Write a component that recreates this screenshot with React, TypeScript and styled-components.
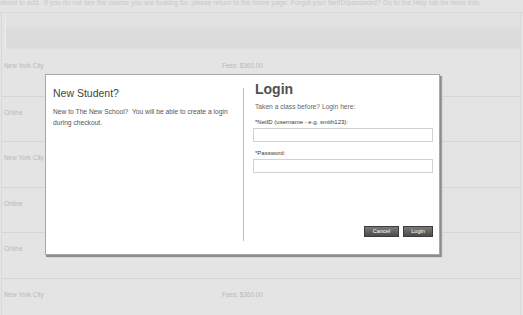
import styled, { createGlobalStyle } from 'styled-components';

const GlobalStyle = createGlobalStyle`
  html, body {
    margin: 0;
    padding: 0;
    background: #e4e4e4;
    font-family: "Liberation Sans", Arial, sans-serif;
    overflow: hidden;
  }
`;

const rows = [
  { place: 'New York City', fees: 'Fees: $360.00' },
  { place: 'Online' },
  { place: 'New York City' },
  { place: 'Online' },
  { place: 'Online' },
  { place: 'New York City', fees: 'Fees: $360.00' },
];

const App = () => {
  return (
    <Page>
      <GlobalStyle />
      <Notice>
        about to add.&nbsp; If you do not see the course you are looking for, please return to the home page. Forgot your NetID/password? Go to the Help tab for more info.
      </Notice>
      <Table>
        <HeaderBand />
        {rows.map((r, i) => (
          <Row key={i}>
            <Place>{r.place}</Place>
            {r.fees && <Fees>{r.fees}</Fees>}
          </Row>
        ))}
      </Table>

      <Modal>
        <LeftCol>
          <Title>New Student?</Title>
          <Body>New to The New School?&nbsp; You will be able to create a login during checkout.</Body>
        </LeftCol>
        <RightCol>
          <LoginTitle>Login</LoginTitle>
          <Sub>Taken a class before? Login here:</Sub>
          <Label>*NetID (username - e.g. smith123):</Label>
          <Input type="text" />
          <Label $gap={7}>*Password:</Label>
          <Input type="password" />
          <Buttons>
            <Button $w={35}>Cancel</Button>
            <Button $w={30}>Login</Button>
          </Buttons>
        </RightCol>
      </Modal>
    </Page>
  );
};

export default App;

const Page = styled.div`
  position: relative;
  width: 523px;
  height: 315px;
  overflow: hidden;
`;

const Notice = styled.div`
  height: 15px;
  margin-top: -2px;
  box-sizing: border-box;
  font-size: 6.9px;
  line-height: 10px;
  color: #c8c8c8;
  white-space: nowrap;
  border-bottom: 1px solid #d9d9d9;
`;

const Table = styled.div`
  margin: 0 2px 0 1px;
  border-left: 1px solid #d8d8d8;
  border-right: 1px solid #d8d8d8;
  display: flex;
  flex-direction: column;
`;

const HeaderBand = styled.div`
  height: 37px;
  margin-left: 3px;
  border-left: 1px solid #ebebeb;
  background: linear-gradient(#e3e3e3 0%, #e1e1e1 38%, #dcdcdc 45%, #dbdbdb 90%, #e2e2e2 100%);
`;

const Row = styled.div`
  display: flex;
  height: 45.5px;
  box-sizing: border-box;
  border-top: 1px solid #d6d6d6;
  padding: 12px 0 0 2px;
  font-size: 6.4px;
  line-height: 8px;
  color: #b9b9b9;
  &:nth-of-type(2) {
    border-top: none;
  }
`;

const Place = styled.div`
  width: 218px;
`;

const Fees = styled.div``;

const Modal = styled.div`
  position: absolute;
  left: 45px;
  top: 74px;
  width: 395px;
  height: 181px;
  box-sizing: border-box;
  background: #fff;
  border: 1px solid #a8a8a8;
  box-shadow: 1px 2px 0 #8c8c8c, 2px 2px 1px #a0a0a0;
  display: grid;
  grid-template-columns: 198px 1fr;
  padding: 13px 0;
`;

const LeftCol = styled.div`
  border-right: 1px solid #bdbdbd;
  padding: 0 7px;
`;

const Title = styled.div`
  margin-top: -1px;
  font-size: 10.5px;
  line-height: 12px;
  color: #444;
`;

const Body = styled.div`
  margin-top: 8px;
  width: 186px;
  font-size: 6.7px;
  line-height: 10.5px;
  color: #555;
`;

const RightCol = styled.div`
  display: flex;
  flex-direction: column;
  padding: 0 6px 0 9px;
`;

const LoginTitle = styled.div`
  margin: -6px 0 0 2px;
  font-size: 14px;
  font-weight: bold;
  line-height: 14px;
  color: #505050;
`;

const Sub = styled.div`
  margin: 5.5px 0 0 2px;
  font-size: 6.7px;
  line-height: 9px;
  color: #666;
`;

const Label = styled.div<{ $gap?: number }>`
  margin: ${(p) => p.$gap ?? 7}px 0 2px 2px;
  font-size: 6px;
  line-height: 8px;
  color: #3a3a3a;
`;

const Input = styled.input`
  display: block;
  width: 180px;
  height: 14px;
  box-sizing: border-box;
  margin: 0;
  border: 1px solid #d2d2d2;
  background: #fff;
  outline: none;
`;

const Buttons = styled.div`
  margin-top: auto;
  margin-bottom: 4px;
  display: flex;
  justify-content: flex-end;
  gap: 4px;
`;

const Button = styled.button<{ $w: number }>`
  width: ${(p) => p.$w}px;
  height: 11px;
  padding: 0;
  box-sizing: border-box;
  border: 1px solid #3c3c3c;
  background: linear-gradient(#7a7a7a, #4c4c4c);
  color: #fff;
  font-family: "Liberation Sans", Arial, sans-serif;
  font-size: 5.6px;
  line-height: 9px;
`;
